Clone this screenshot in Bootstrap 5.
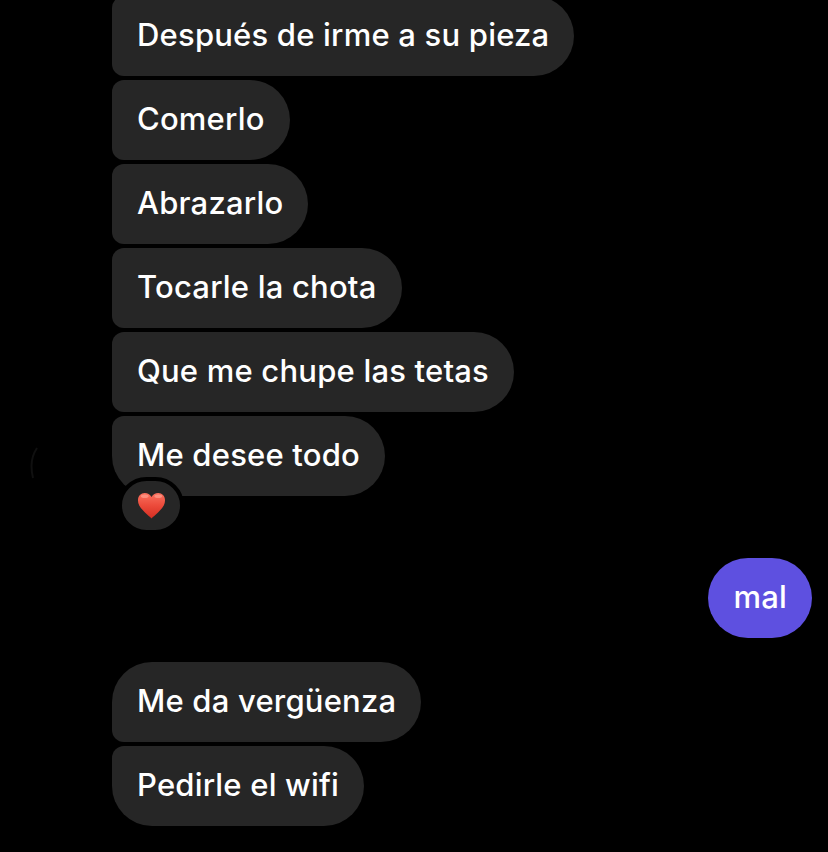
<!DOCTYPE html>
<html lang="es">
<head>
    <meta charset="UTF-8">
    <meta name="viewport" content="width=device-width, initial-scale=1">
    <title>Mensajes</title>
    <link href="https://cdn.jsdelivr.net/npm/bootstrap@5.3.0/dist/css/bootstrap.min.css" rel="stylesheet">
    <style>
        html, body { height: 852px; overflow: hidden; background: #000; }
        .chat-wrap { margin-top: -4px; padding: 0 16px 0 112px; }
        .msg-group { gap: 4px; }
        .burbuja {
            height: 80px;
            padding: 0 25px;
            color: #fff;
            background: #262626;
            font-family: Inter, "Liberation Sans", sans-serif;
            font-size: 31px;
            font-weight: 500;
            letter-spacing: .2px;
            line-height: 78px;
            white-space: nowrap;
            border-radius: 12px 40px 40px 12px;
        }
        .burbuja.primera { border-top-left-radius: 40px; }
        .burbuja.ultima { border-bottom-left-radius: 40px; }
        .burbuja.propia { background: #5e50e0; border-radius: 40px; }
        .con-reaccion { margin-bottom: 62px; }
        .reaccion {
            position: absolute;
            left: 6px;
            top: 61px;
            width: 66px;
            height: 57px;
            background: #262626;
            border: 4px solid #000;
            border-radius: 29px;
        }
        .reaccion svg { width: 29px; height: 29px; }
        /* borde casi invisible del avatar */
        .avatar-sombra {
            position: absolute;
            left: -82px;
            top: 30px;
            width: 8px;
            height: 34px;
        }
        .fila-propia { margin-bottom: 24px; }
    </style>
</head>
<body>
    <div class="chat-wrap d-flex flex-column">
        <div class="msg-group d-flex flex-column align-items-start">
            <div class="burbuja">Después de irme a su pieza</div>
            <div class="burbuja">Comerlo</div>
            <div class="burbuja">Abrazarlo</div>
            <div class="burbuja">Tocarle la chota</div>
            <div class="burbuja">Que me chupe las tetas</div>
            <div class="position-relative con-reaccion">
                <svg class="avatar-sombra" viewBox="0 0 8 34">
                    <path d="M7 2C3 8 1.500 14 1.500 20C1.500 24 2 28 3 32" fill="none" stroke="#101010" stroke-width="2"/>
                </svg>
                <div class="burbuja ultima">Me desee todo</div>
                <div class="reaccion d-flex align-items-center justify-content-center">
                    <svg viewBox="0 0 30 30">
                        <defs>
                            <linearGradient id="corazon" x1="0" y1="0" x2="0" y2="1">
                                <stop offset="0" stop-color="#f8715f"/>
                                <stop offset=".5" stop-color="#ec4a3a"/>
                                <stop offset="1" stop-color="#d42e22"/>
                            </linearGradient>
                        </defs>
                        <path d="M15 28.500C13.800 27 11 25 8 22C4 18 1 14.500 1 9.500C1 5 4.200 2 8 2C11 2 13.500 3.500 15 6.200C16.500 3.500 19 2 22 2C25.800 2 29 5 29 9.500C29 14.500 26 18 22 22C19 25 16.200 27 15 28.500Z" fill="url(#corazon)"/>
                        <ellipse cx="8" cy="5.500" rx="4" ry="1.800" fill="#ffa899" opacity=".6"/>
                        <ellipse cx="22" cy="5.500" rx="4" ry="1.800" fill="#ffa899" opacity=".6"/>
                    </svg>
                </div>
            </div>
        </div>
        <div class="fila-propia d-flex justify-content-end">
            <div class="burbuja propia">mal</div>
        </div>
        <div class="msg-group d-flex flex-column align-items-start">
            <div class="burbuja primera">Me da vergüenza</div>
            <div class="burbuja ultima">Pedirle el wifi</div>
        </div>
    </div>
    <script src="https://cdn.jsdelivr.net/npm/bootstrap@5.3.0/dist/js/bootstrap.bundle.min.js"></script>
</body>
</html>
